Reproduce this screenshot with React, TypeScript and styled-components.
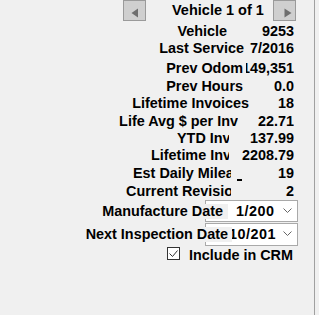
import React from "react";
import styled, { createGlobalStyle } from "styled-components";

const GlobalStyle = createGlobalStyle`
  html, body {
    margin: 0;
    padding: 0;
    background: #f0f0f0;
  }
  body {
    font-family: "Liberation Sans", Arial, sans-serif;
  }
`;

const Panel = styled.div`
  width: 315px;
  height: 315px;
  box-sizing: border-box;
  border-right: 1px solid #a0a0a0;
  background: #f0f0f0;
  color: #000;
  font-weight: bold;
  font-size: 14.4px;
  overflow: hidden;
`;

const Pager = styled.div`
  display: flex;
  align-items: flex-start;
  height: 23px;
  padding-left: 123px;
`;

const NavButton = styled.div`
  box-sizing: border-box;
  width: 23px;
  height: 21px;
  border: 1px solid #9a9a9a;
  background: #cfcfcf;
  display: flex;
  align-items: center;
  justify-content: center;
`;

const Title = styled.div`
  width: 101px;
  margin-left: 26px;
  font-size: 14.5px;
  line-height: 21px;
  white-space: nowrap;
`;

const Row = styled.div<{ $h: number }>`
  display: flex;
  justify-content: flex-end;
  height: ${(p) => p.$h}px;
  line-height: 17px;
  padding-right: 20px;
  white-space: nowrap;
`;

const Label = styled.div<{ $w?: number; $gap?: number }>`
  overflow: hidden;
  flex-shrink: 0;
  ${(p) => (p.$w ? `width: ${p.$w}px;` : "")}
  margin-right: ${(p) => p.$gap ?? 0}px;
`;

const Value = styled.div<{ $w: number }>`
  width: ${(p) => p.$w}px;
  flex-shrink: 0;
  display: flex;
  justify-content: flex-end;
  overflow: hidden;
`;

const Stub = styled.span`
  width: 5px;
  height: 2px;
  margin-top: 14px;
  margin-left: 6px;
  margin-right: auto;
  background: #000;
`;

const FieldRow = styled.div<{ $h: number }>`
  display: flex;
  justify-content: flex-end;
  align-items: center;
  height: ${(p) => p.$h}px;
  padding-right: 16px;
  white-space: nowrap;
`;

const FieldLabel = styled.div<{ $overlap: number; $pad: number }>`
  position: relative;
  z-index: 1;
  background: #f0f0f0;
  line-height: 15px;
  padding-right: ${(p) => p.$pad}px;
  margin-right: -${(p) => p.$overlap}px;
`;

const Combo = styled.div<{ $h: number }>`
  box-sizing: border-box;
  width: 93px;
  height: ${(p) => p.$h}px;
  border: 1px solid #a9a9a9;
  background: #fff;
  display: flex;
  align-items: center;
`;

const ComboText = styled.div<{ $pad: number }>`
  flex: 1;
  overflow: hidden;
  padding-left: ${(p) => p.$pad}px;
  line-height: 15px;
  letter-spacing: 0.5px;
`;

const Chevron = styled.svg`
  flex-shrink: 0;
  margin: 0 5px 0 5px;
`;

const CheckRow = styled.div`
  display: flex;
  justify-content: flex-end;
  align-items: flex-start;
  height: 17px;
  padding-right: 21px;
  line-height: 17px;
`;

const CheckBox = styled.div`
  box-sizing: border-box;
  width: 13px;
  height: 13px;
  margin-top: 1px;
  margin-right: 9px;
  border: 1px solid #333;
  background: #fff;
  display: flex;
  align-items: center;
  justify-content: center;
`;

const CheckText = styled.div`
  margin-top: 1px;
`;

type Stat = {
  label: string;
  value: string;
  h: number;
  vw: number;
  lw?: number;
  gap?: number;
  stub?: boolean;
};

const stats: Stat[] = [
  { label: "Vehicle", value: "9253", h: 17, vw: 67 },
  { label: "Last Service", value: "7/2016", h: 20, vw: 50 },
  { label: "Prev Odom", value: "149,351", h: 18, vw: 48, gap: 3 },
  { label: "Prev Hours", value: "0.0", h: 17, vw: 51 },
  { label: "Lifetime Invoices", value: "18", h: 18, vw: 45 },
  { label: "Life Avg $ per Inv", value: "22.71", h: 17, vw: 56 },
  { label: "YTD Invoices", value: "137.99", h: 17, vw: 65, lw: 52 },
  { label: "Lifetime Invoices", value: "2208.79", h: 18, vw: 65, lw: 78 },
  { label: "Est Daily Mileage", value: "19", h: 18, vw: 63, lw: 98, stub: true },
  { label: "Current Revision", value: "2", h: 17, vw: 63, lw: 105 },
];

const ChevronIcon = () => (
  <Chevron width="9" height="6" viewBox="0 0 9 6">
    <polyline points="0.5,0.5 4.5,4.5 8.5,0.5" fill="none" stroke="#666" strokeWidth="1" />
  </Chevron>
);

export default function App() {
  return (
    <>
      <GlobalStyle />
      <Panel>
        <Pager>
          <NavButton>
            <svg width="21" height="19" viewBox="0 0 21 19">
              <polygon points="14,7.5 14,16.5 7.5,12" fill="#6e6e6e" />
            </svg>
          </NavButton>
          <Title>Vehicle 1 of 1</Title>
          <NavButton>
            <svg width="20" height="19" viewBox="0 0 20 19">
              <polygon points="9.5,7.5 9.5,16.5 16.5,12" fill="#6e6e6e" />
            </svg>
          </NavButton>
        </Pager>
        {stats.map((s, i) => (
          <Row key={i} $h={s.h}>
            <Label $w={s.lw} $gap={s.gap}>
              {s.label}
            </Label>
            <Value $w={s.vw}>
              {s.stub && <Stub />}
              <span>{s.value}</span>
            </Value>
          </Row>
        ))}
        <FieldRow $h={22}>
          <FieldLabel $overlap={23} $pad={5}>
            Manufacture Date
          </FieldLabel>
          <Combo $h={22}>
            <ComboText $pad={30}>1/200</ComboText>
            <ChevronIcon />
          </Combo>
        </FieldRow>
        <FieldRow $h={24}>
          <FieldLabel $overlap={27} $pad={4}>
            Next Inspection Date
          </FieldLabel>
          <Combo $h={23}>
            <ComboText $pad={23}>10/201</ComboText>
            <ChevronIcon />
          </Combo>
        </FieldRow>
        <CheckRow>
          <CheckBox>
            <svg width="11" height="11" viewBox="0 0 11 11">
              <polyline points="1.5,5.5 4.5,8.5 9.5,2.5" fill="none" stroke="#333" strokeWidth="1" />
            </svg>
          </CheckBox>
          <CheckText>Include in CRM</CheckText>
        </CheckRow>
      </Panel>
    </>
  );
}
